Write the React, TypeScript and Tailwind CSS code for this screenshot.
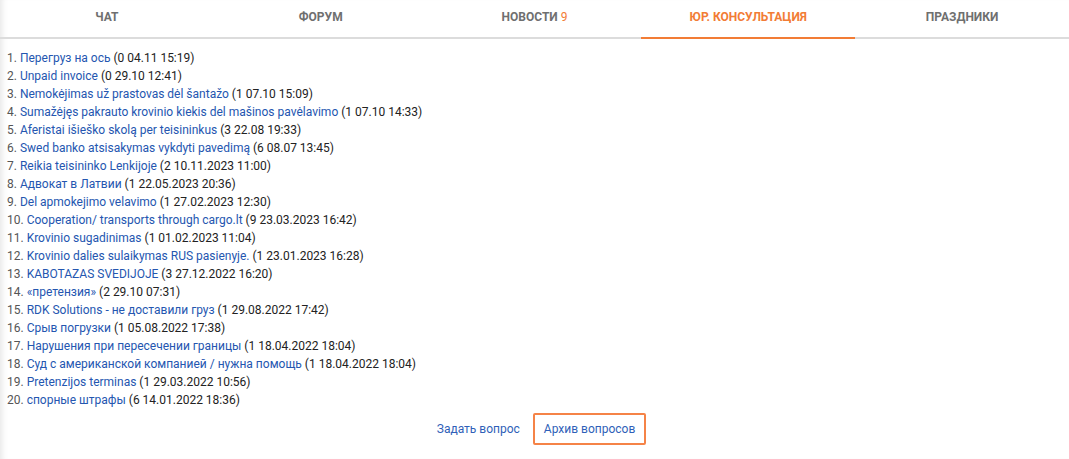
import React from "react";

const tabs = [
  { label: "Чат" },
  { label: "Форум" },
  { label: "Новости", badge: "9" },
  { label: "Юр. консультация", active: true },
  { label: "Праздники" },
];

const questions: [string, string][] = [
  ["Перегруз на ось", "0 04.11 15:19"],
  ["Unpaid invoice", "0 29.10 12:41"],
  ["Nemokėjimas už prastovas dėl šantažo", "1 07.10 15:09"],
  ["Sumažėjęs pakrauto krovinio kiekis del mašinos pavėlavimo", "1 07.10 14:33"],
  ["Aferistai išieško skolą per teisininkus", "3 22.08 19:33"],
  ["Swed banko atsisakymas vykdyti pavedimą", "6 08.07 13:45"],
  ["Reikia teisininko Lenkijoje", "2 10.11.2023 11:00"],
  ["Адвокат в Латвии", "1 22.05.2023 20:36"],
  ["Del apmokejimo velavimo", "1 27.02.2023 12:30"],
  ["Cooperation/ transports through cargo.lt", "9 23.03.2023 16:42"],
  ["Krovinio sugadinimas", "1 01.02.2023 11:04"],
  ["Krovinio dalies sulaikymas RUS pasienyje.", "1 23.01.2023 16:28"],
  ["KABOTAZAS SVEDIJOJE", "3 27.12.2022 16:20"],
  ["«претензия»", "2 29.10 07:31"],
  ["RDK Solutions - не доставили груз", "1 29.08.2022 17:42"],
  ["Срыв погрузки", "1 05.08.2022 17:38"],
  ["Нарушения при пересечении границы", "1 18.04.2022 18:04"],
  ["Суд с американской компанией / нужна помощь", "1 18.04.2022 18:04"],
  ["Pretenzijos terminas", "1 29.03.2022 10:56"],
  ["спорные штрафы", "6 14.01.2022 18:36"],
];

export default function App() {
  return (
    <div className="w-[1069px] h-[459px] bg-white overflow-hidden shadow-[inset_7px_0_6px_-5px_rgba(0,0,0,0.10)] font-['Roboto','Liberation_Sans',sans-serif]">
      {/* Tabs */}
      <div className="flex h-[39px] border-b-2 border-[#dcdcdc]">
        {tabs.map((t) => (
          <div
            key={t.label}
            className={`flex-1 flex items-center justify-center uppercase font-bold text-[12px] -mb-[2px] pb-[3px] ${
              t.active ? "text-[#f27c35] border-b-2 border-[#f27c35]" : "text-[#6f6f6f] border-b-2 border-transparent"
            }`}
          >
            {t.label}
            {t.badge && <span className="ml-[3px] text-[#f27c35] font-normal">{t.badge}</span>}
          </div>
        ))}
      </div>

      {/* Question list */}
      <ol className="pt-[10px] pl-[7px] text-[12px] leading-[18px] text-[#222]">
        {questions.map(([title, meta], i) => (
          <li key={i}>
            <span className="text-[#555]">{i + 1}. </span>
            <a className="text-[#2456b0]">{title}</a> ({meta})
          </li>
        ))}
      </ol>

      {/* Actions */}
      <div className="flex justify-center items-center gap-[13px] pt-[4px] text-[12px] pl-[14px]">
        <a className="text-[#2f5fb8]">Задать вопрос</a>
        <a className="text-[#2f5fb8] border-2 border-[#f58347] rounded-[2px] pl-[9px] pr-[9px] h-[32px] flex items-center">
          Архив вопросов
        </a>
      </div>
    </div>
  );
}
